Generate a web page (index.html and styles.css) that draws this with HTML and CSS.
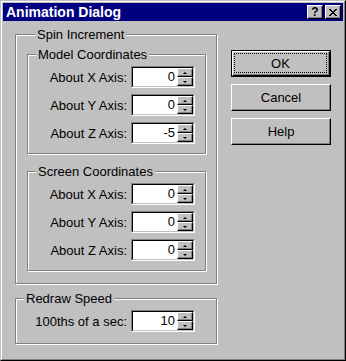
FILE: index.html
```html
<!DOCTYPE html>
<html>
<head>
<meta charset="utf-8">
<link rel="stylesheet" href="styles.css">
</head>
<body>
<div class="win">
  <div class="frame">
    <div class="titlebar">
      <span class="title">Animation Dialog</span>
      <div class="tbtns">
        <div class="tbtn q">?</div>
        <div class="tbtn"><svg width="8" height="7" viewBox="0 0 8 7" shape-rendering="crispEdges"><path d="M0 0h2v1h1v1h2v-1h1v-1h2v1h-1v1h-1v1h-1v1h1v1h1v1h1v1h-2v-1h-1v-1h-2v1h-1v1h-2v-1h1v-1h1v-1h1v-1h-1v-1h-1v-1h-1z" fill="#000"/></svg></div>
      </div>
    </div>
    <div class="body">
      <div class="left">
        <div class="group spin">
          <div class="legend">Spin Increment</div>
          <div class="group sub model">
            <div class="legend">Model Coordinates</div>
            <div class="rows">
              <div class="row"><span class="lbl">About X Axis:</span><div class="edit"><div class="edit-in"><span class="val">0</span><div class="spinbtns"><div class="sb"><span class="up"></span></div><div class="sb"><span class="dn"></span></div></div></div></div></div>
              <div class="row"><span class="lbl">About Y Axis:</span><div class="edit"><div class="edit-in"><span class="val">0</span><div class="spinbtns"><div class="sb"><span class="up"></span></div><div class="sb"><span class="dn"></span></div></div></div></div></div>
              <div class="row"><span class="lbl">About Z Axis:</span><div class="edit"><div class="edit-in"><span class="val">-5</span><div class="spinbtns"><div class="sb"><span class="up"></span></div><div class="sb"><span class="dn"></span></div></div></div></div></div>
            </div>
          </div>
          <div class="group sub screen">
            <div class="legend">Screen Coordinates</div>
            <div class="rows">
              <div class="row"><span class="lbl">About X Axis:</span><div class="edit"><div class="edit-in"><span class="val">0</span><div class="spinbtns"><div class="sb"><span class="up"></span></div><div class="sb"><span class="dn"></span></div></div></div></div></div>
              <div class="row"><span class="lbl">About Y Axis:</span><div class="edit"><div class="edit-in"><span class="val">0</span><div class="spinbtns"><div class="sb"><span class="up"></span></div><div class="sb"><span class="dn"></span></div></div></div></div></div>
              <div class="row"><span class="lbl">About Z Axis:</span><div class="edit"><div class="edit-in"><span class="val">0</span><div class="spinbtns"><div class="sb"><span class="up"></span></div><div class="sb"><span class="dn"></span></div></div></div></div></div>
            </div>
          </div>
        </div>
        <div class="group redraw">
          <div class="legend">Redraw Speed</div>
          <div class="rows">
            <div class="row"><span class="lbl wide">100ths of a sec:</span><div class="edit"><div class="edit-in"><span class="val">10</span><div class="spinbtns"><div class="sb"><span class="up"></span></div><div class="sb"><span class="dn"></span></div></div></div></div></div>
          </div>
        </div>
      </div>
      <div class="btns">
        <div class="btn default"><div class="face"><span class="focus">OK</span></div></div>
        <div class="btn"><div class="face">Cancel</div></div>
        <div class="btn"><div class="face">Help</div></div>
      </div>
    </div>
  </div>
</div>
</body>
</html>
```
FILE: styles.css
```css
* { box-sizing: border-box; }
html, body { margin: 0; padding: 0; background: #c0c0c0; }
body { font-family: "Liberation Sans", Arial, sans-serif; font-size: 13px; color: #000; }

.win {
  width: 346px; height: 361px;
  border: 1px solid; border-color: #c0c0c0 #000 #000 #c0c0c0;
  background: #c0c0c0;
}
.frame {
  height: 100%;
  border: 1px solid; border-color: #fff #808080 #808080 #fff;
  padding: 1px;
  display: flex; flex-direction: column;
}
.titlebar {
  height: 18px; background: #000080; color: #fff;
  display: flex; align-items: center;
  padding: 0 2px 0 3px;
}
.title { flex: 1; font-weight: bold; font-size: 14px; line-height: 18px; }
.tbtns { display: flex; gap: 2px; }
.tbtn {
  width: 16px; height: 14px; background: #c0c0c0;
  border: 1px solid; border-color: #fff #000 #000 #fff;
  box-shadow: inset -1px -1px #808080;
  display: flex; align-items: center; justify-content: center;
  color: #000;
}
.tbtn.q { font-weight: bold; font-size: 12px; line-height: 12px; }

.body { flex: 1; display: flex; padding: 13px 0 0 12px; }
.left { width: 202px; }

.group {
  border: 1px solid #808080;
  box-shadow: inset 1px 1px #fff, 1px 1px #fff;
}
.legend {
  display: table; margin: -8px 0 0 8px; padding: 0 2px;
  background: #c0c0c0; height: 15px; line-height: 15px;
}
.spin { width: 202px; padding: 0 0 12px 11px; }
.sub { width: 179px; padding-bottom: 9px; }
.model { margin-top: 12px; }
.screen { margin-top: 17px; }
.redraw { width: 202px; margin-top: 14px; padding-bottom: 11px; }

.rows { display: flex; flex-direction: column; gap: 6px; margin-top: 4px; }
.row { display: flex; align-items: center; height: 22px; }
.lbl { width: 99px; margin-right: 4px; text-align: right; white-space: nowrap; }
.lbl.wide { width: 111px; }

.edit {
  width: 64px; height: 22px;
  border: 1px solid; border-color: #808080 #fff #fff #808080;
  display: flex;
}
.edit-in {
  flex: 1; display: flex; background: #fff;
  border: 1px solid; border-color: #000 #c0c0c0 #c0c0c0 #000;
}
.val { flex: 1; text-align: right; padding-right: 2px; line-height: 18px; }
.spinbtns { width: 16px; display: flex; flex-direction: column; }
.sb {
  flex: 1; background: #c0c0c0;
  border: 1px solid; border-color: #fff #000 #000 #fff;
  box-shadow: inset -1px -1px #808080;
  display: flex; align-items: center; justify-content: center;
}
.up, .dn { width: 0; height: 0; border-left: 2px solid transparent; border-right: 2px solid transparent; }
.up { border-bottom: 2px solid #000; }
.dn { border-top: 2px solid #000; }

.btns { margin: 16px 0 0 14px; display: flex; flex-direction: column; gap: 7px; }
.btn {
  width: 100px; height: 27px;
  border: 1px solid; border-color: #fff #000 #000 #fff;
  box-shadow: inset -1px -1px #808080;
  display: flex;
}
.btn .face { flex: 1; display: flex; align-items: center; justify-content: center; }
.btn.default { border: 1px solid #000; box-shadow: none; }
.btn.default .face {
  border: 1px solid; border-color: #fff #000 #000 #fff;
  box-shadow: inset -1px -1px #808080;
  padding: 1px 2px 2px 1px;
}
.focus {
  flex: 1; align-self: stretch;
  border: 1px dotted #000;
  display: flex; align-items: center; justify-content: center;
}
```
